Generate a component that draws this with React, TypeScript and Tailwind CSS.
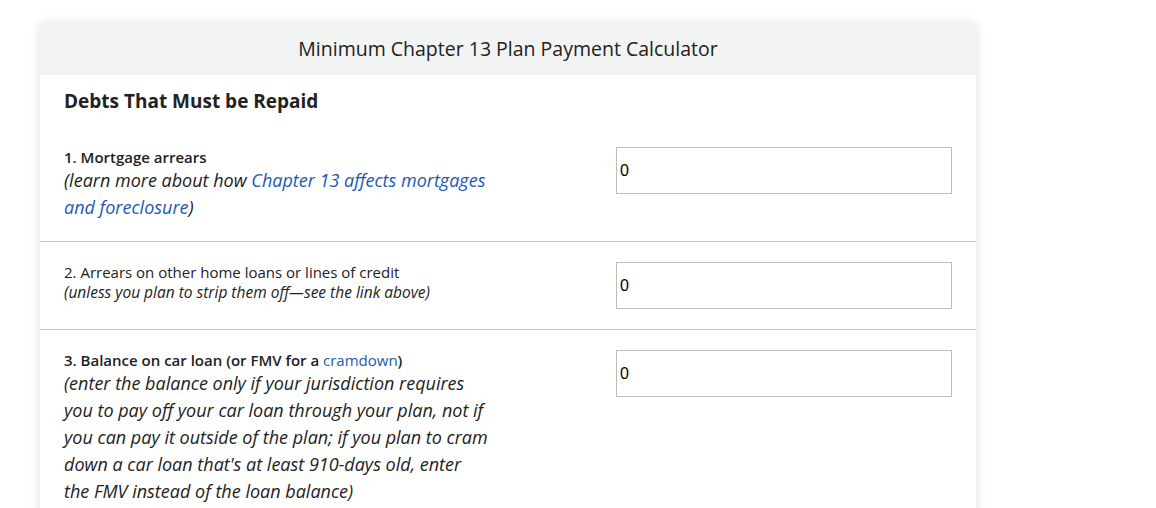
export default function App() {
  const font = { fontFamily: '"Open Sans", "Noto Sans", sans-serif' };
  const inputFont = { fontFamily: '"Liberation Sans", Arial, sans-serif' };
  return (
    <div className="min-h-screen bg-white pt-[23px] text-[#222]" style={font}>
      <div className="ml-[40px] w-[936px] bg-white shadow-[0_0_10px_rgba(0,0,0,0.12)]">
        {/* Header */}
        <div className="flex h-[52px] items-center justify-center bg-[#f2f3f3] text-[19.5px]">
          Minimum Chapter 13 Plan Payment Calculator
        </div>

        {/* Section heading */}
        <div className="px-6 pb-3 pt-3">
          <h2 className="text-[19px] font-bold leading-[28px]">Debts That Must be Repaid</h2>
        </div>

        {/* Row 1 */}
        <div className="flex border-b border-[#c4c4c4] px-6 py-5">
          <div className="w-[426px]">
            <div className="text-[15px] font-semibold leading-5">1. Mortgage arrears</div>
            <div className="text-[18px] italic leading-[27px]">
              (learn more about how{' '}
              <a href="#" className="text-[#1d59b3]">Chapter 13 affects mortgages and foreclosure</a>)
            </div>
          </div>
          <input
            type="text"
            defaultValue="0"
            className="ml-auto h-[47px] w-[336px] border border-[#bdbdbd] px-[3px] text-[16px] text-black"
            style={inputFont}
          />
        </div>

        {/* Row 2 */}
        <div className="flex border-b border-[#c4c4c4] px-6 py-5">
          <div className="w-[426px]">
            <div className="text-[15px] font-medium leading-5">2. Arrears on other home loans or lines of credit</div>
            <div className="text-[15.5px] font-medium italic leading-5">(unless you plan to strip them off—see the link above)</div>
          </div>
          <input
            type="text"
            defaultValue="0"
            className="ml-auto h-[47px] w-[336px] border border-[#bdbdbd] px-[3px] text-[16px] text-black"
            style={inputFont}
          />
        </div>

        {/* Row 3 */}
        <div className="flex px-6 py-5">
          <div className="w-[426px]">
            <div className="text-[15px] font-semibold leading-5">
              3. Balance on car loan (or FMV for a{' '}
              <a href="#" className="font-normal text-[#1d59b3]">cramdown</a>)
            </div>
            <div className="text-[18px] italic leading-[27px]">
              (enter the balance only if your jurisdiction requires you to pay off your car loan through your plan, not if you can pay it outside of the plan; if you plan to cram down a car loan that's at least 910-days old, enter the FMV instead of the loan balance)
            </div>
          </div>
          <input
            type="text"
            defaultValue="0"
            className="ml-auto h-[47px] w-[336px] border border-[#bdbdbd] px-[3px] text-[16px] text-black"
            style={inputFont}
          />
        </div>
      </div>
    </div>
  );
}
